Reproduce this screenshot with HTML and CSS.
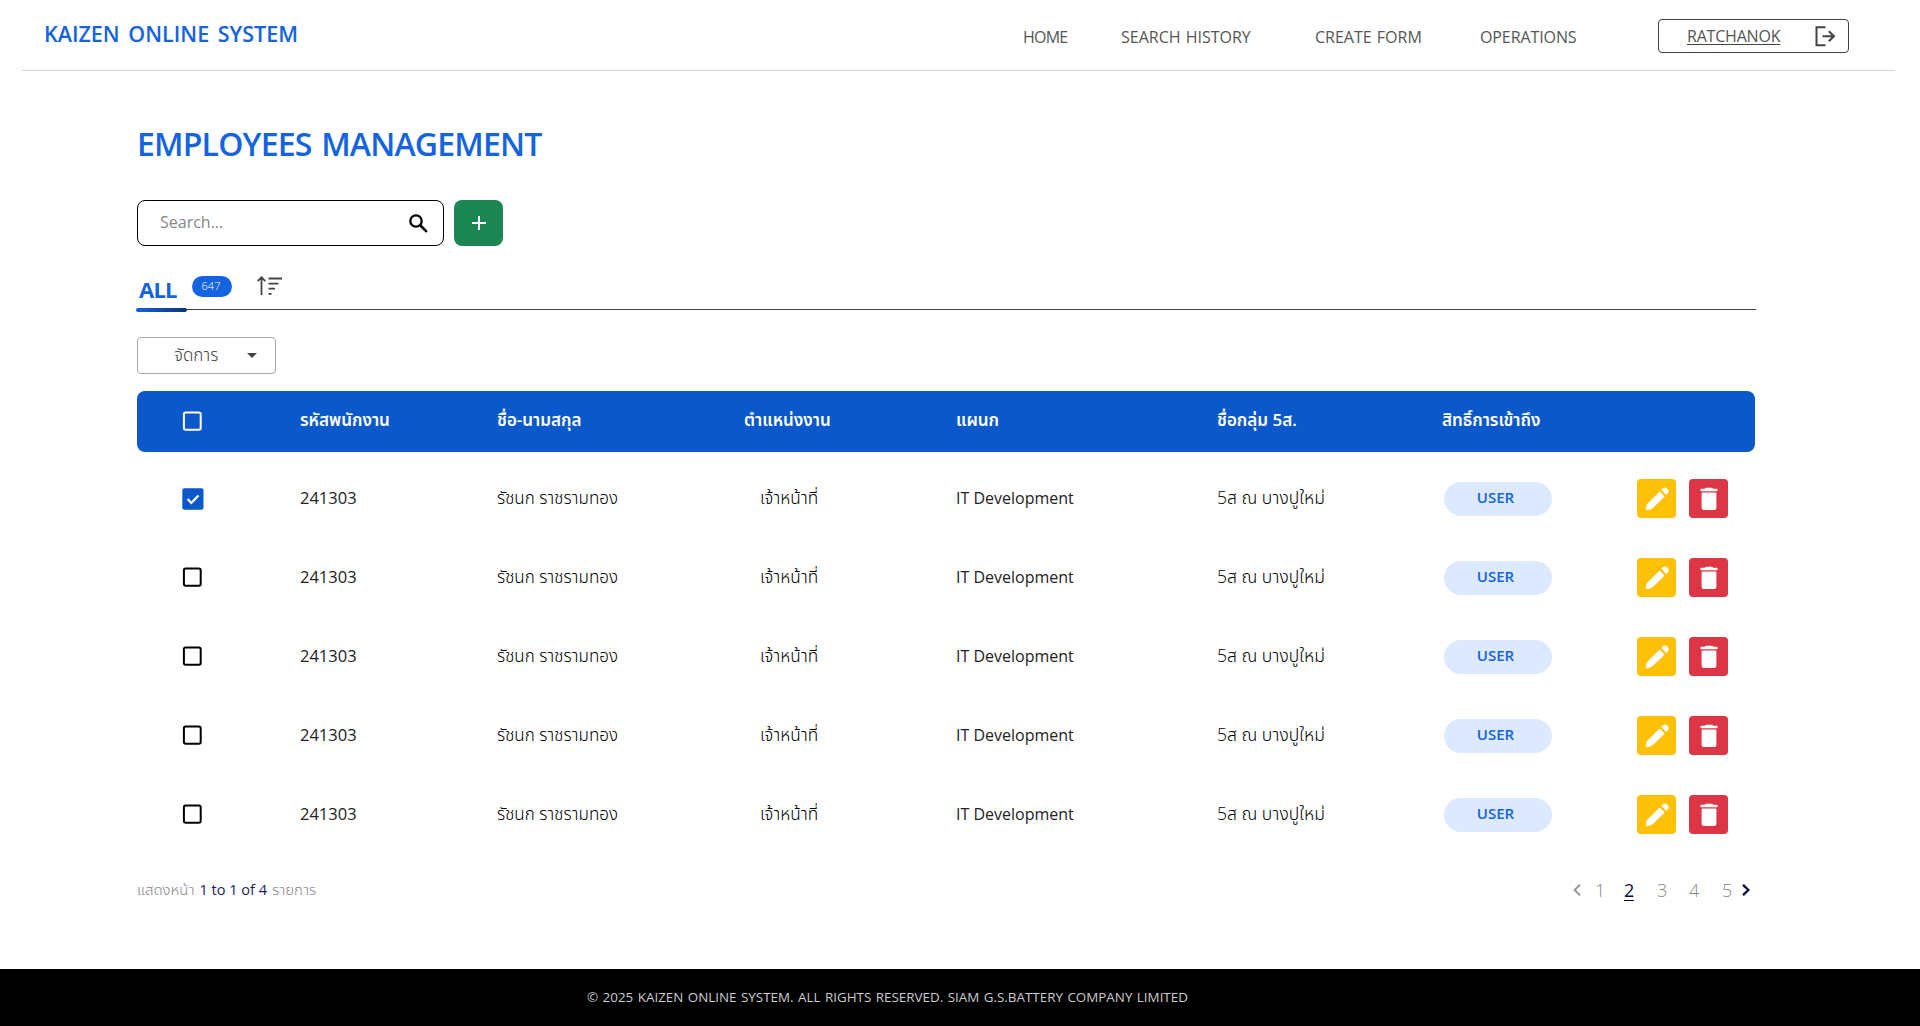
FILE: index.html
```
<!DOCTYPE html>
<html lang="th">
<head>
<meta charset="utf-8">
<title>Kaizen Online System</title>
<link rel="stylesheet" href="styles.css">
</head>
<body>
<svg class="sprite" aria-hidden="true">
  <symbol id="box" viewBox="0 0 20 20"><rect x="1.9" y="1.4" width="16.8" height="17.4" rx="1.8" fill="none" stroke="currentColor" stroke-width="2"/></symbol>
  <symbol id="box-checked" viewBox="0 0 22 22"><rect x="0.3" y="0.3" width="21.2" height="21.4" rx="2" fill="#0b58ca"/><path d="M5.6 11 9.3 14.9 16.5 7.5" fill="none" stroke="#fff" stroke-width="2.2"/></symbol>
  <symbol id="pencil" viewBox="0 0 24 24"><path d="M14.6 4.4 19.7 9.4 8.9 20.1Q6 23.3 .8 23.2 .8 17.4 3.5 15.6Z M16.2 2.8 17.9 1.3Q20.2-.4 22.7 1.9 24.7 4.6 22.8 6.2L21.3 7.9Z" fill="#fff"/></symbol>
  <symbol id="trash" viewBox="0 0 18 24"><path d="M1 1.8H4.8Q5.2.7 6.4.7H11.6Q12.8.7 13.2 1.8H17Q17.6 1.8 17.6 3T17 4.2H1Q.4 4.2.4 3T1 1.8Z M1.6 6.4Q1.6 5.6 2.6 5.6H15.4Q16.4 5.6 16.4 6.4V20.8Q16.4 23 14.2 23H3.8Q1.6 23 1.6 20.8Z" fill="#fff"/></symbol>
</svg>

<header class="topbar">
  <div class="brand">KAIZEN ONLINE SYSTEM</div>
  <nav class="nav">
    <a class="nav-home">HOME</a>
    <a class="nav-history">SEARCH HISTORY</a>
    <a class="nav-create">CREATE FORM</a>
    <a class="nav-ops">OPERATIONS</a>
  </nav>
  <button class="user">
    <span>RATCHANOK</span>
    <svg width="21" height="21" viewBox="0 0 21 21" fill="none" stroke="#444" stroke-width="2"><path d="M10.5 1.3H1.5V19.2H10.5M7.5 10.2H19M13.8 5.2 19 10.2 13.8 15.2"/></svg>
  </button>
</header>

<main class="page">
  <h1 class="title">EMPLOYEES MANAGEMENT</h1>

  <div class="tools">
    <div class="search">
      <span>Search...</span>
      <svg width="19" height="19" viewBox="0 0 19 19" fill="none" stroke="#000"><circle cx="7" cy="7" r="5.7" stroke-width="2.3"/><path d="M11 11 17.8 17.8" stroke-width="2.6"/></svg>
    </div>
    <button class="add"><svg width="14" height="14" viewBox="0 0 14 14" stroke="#fff" stroke-width="2"><path d="M0 7H14M7 0V14"/></svg></button>
  </div>

  <div class="tabs">
    <div class="tab">ALL</div>
    <span class="count">647</span>
    <svg class="sort" width="26" height="20" viewBox="0 0 26 20" fill="none" stroke="#444" stroke-width="1.8"><path d="M4.5 19V1.5M.7 5.2 4.5 1.3 8.3 5.2"/><path d="M11.5 2.5H25M11.5 7.6H21.5M11.5 12.7H18M11.5 17.8H14.5"/></svg>
  </div>

  <button class="manage"><span>จัดการ</span><i class="caret"></i></button>

  <section class="table">
    <div class="row head">
      <svg class="check" width="20" height="20"><use href="#box"/></svg>
      <span>รหัสพนักงาน</span><span>ชื่อ-นามสกุล</span><span>ตำแหน่งงาน</span><span>แผนก</span><span>ชื่อกลุ่ม 5ส.</span><span>สิทธิ์การเข้าถึง</span><span></span>
    </div>
    <div class="row">
      <svg class="checked" width="22" height="22"><use href="#box-checked"/></svg>
      <span class="code">241303</span><span class="name">รัชนก ราชรามทอง</span><span class="job">เจ้าหน้าที่</span><span class="dept">IT Development</span><span class="group">5ส ณ บางปูใหม่</span><span class="role">USER</span>
      <div class="actions"><button class="edit"><svg width="24" height="24"><use href="#pencil"/></svg></button><button class="del"><svg width="18" height="24"><use href="#trash"/></svg></button></div>
    </div>
    <div class="row">
      <svg class="check" width="20" height="20"><use href="#box"/></svg>
      <span class="code">241303</span><span class="name">รัชนก ราชรามทอง</span><span class="job">เจ้าหน้าที่</span><span class="dept">IT Development</span><span class="group">5ส ณ บางปูใหม่</span><span class="role">USER</span>
      <div class="actions"><button class="edit"><svg width="24" height="24"><use href="#pencil"/></svg></button><button class="del"><svg width="18" height="24"><use href="#trash"/></svg></button></div>
    </div>
    <div class="row">
      <svg class="check" width="20" height="20"><use href="#box"/></svg>
      <span class="code">241303</span><span class="name">รัชนก ราชรามทอง</span><span class="job">เจ้าหน้าที่</span><span class="dept">IT Development</span><span class="group">5ส ณ บางปูใหม่</span><span class="role">USER</span>
      <div class="actions"><button class="edit"><svg width="24" height="24"><use href="#pencil"/></svg></button><button class="del"><svg width="18" height="24"><use href="#trash"/></svg></button></div>
    </div>
    <div class="row">
      <svg class="check" width="20" height="20"><use href="#box"/></svg>
      <span class="code">241303</span><span class="name">รัชนก ราชรามทอง</span><span class="job">เจ้าหน้าที่</span><span class="dept">IT Development</span><span class="group">5ส ณ บางปูใหม่</span><span class="role">USER</span>
      <div class="actions"><button class="edit"><svg width="24" height="24"><use href="#pencil"/></svg></button><button class="del"><svg width="18" height="24"><use href="#trash"/></svg></button></div>
    </div>
    <div class="row">
      <svg class="check" width="20" height="20"><use href="#box"/></svg>
      <span class="code">241303</span><span class="name">รัชนก ราชรามทอง</span><span class="job">เจ้าหน้าที่</span><span class="dept">IT Development</span><span class="group">5ส ณ บางปูใหม่</span><span class="role">USER</span>
      <div class="actions"><button class="edit"><svg width="24" height="24"><use href="#pencil"/></svg></button><button class="del"><svg width="18" height="24"><use href="#trash"/></svg></button></div>
    </div>
  </section>

  <div class="bottom">
    <div class="summary"><span>แสดงหน้า</span><b>1 to 1 of 4</b><span>รายการ</span></div>
    <div class="pager">
      <svg width="8" height="12" viewBox="0 0 8 12" fill="none" stroke="#999" stroke-width="2"><path d="M7 .8 1.6 6 7 11.2"/></svg>
      <span>1</span><span class="current">2</span><span>3</span><span>4</span><span>5</span>
      <svg width="8" height="12" viewBox="0 0 8 12" fill="none" stroke="#0a0a3c" stroke-width="2.3"><path d="M1 .8 6.4 6 1 11.2"/></svg>
    </div>
  </div>
</main>

<footer class="footer">© 2025 KAIZEN ONLINE SYSTEM. ALL RIGHTS RESERVED. SIAM G.S.BATTERY COMPANY LIMITED</footer>
</body>
</html>
```
FILE: styles.css
```
* { box-sizing: border-box; }
body {
  margin: 0;
  height: 1026px;
  display: flex;
  flex-direction: column;
  background: #fff;
  font-family: "Open Sans", "Noto Sans Thai", "Noto Sans", sans-serif;
  white-space: nowrap;
}
button { font: inherit; padding: 0; border: 0; background: none; display: flex; align-items: center; }
svg { display: block; flex: none; }
.sprite { position: absolute; width: 0; height: 0; }

.topbar {
  height: 71px;
  margin: 0 25px 0 22px;
  padding-left: 22px;
  border-bottom: 1px solid #d4d4d4;
  display: flex;
  align-items: flex-start;
  flex: none;
}
.brand { width: 979px; padding-top: 19px; font-size: 21.5px; line-height: 29px; font-weight: 600; word-spacing: 3px; color: #1463e0; }
.nav { width: 635px; padding-top: 25px; display: grid; grid-template-columns: 98px 194px 165px 1fr; font-size: 16px; line-height: 24px; font-weight: 400; color: #555; word-spacing: 1px; }
.nav-home { letter-spacing: -.8px; }
.nav-ops { letter-spacing: -.1px; }
.user { width: 191px; height: 34px; margin-top: 19px; padding: 0 12px 0 28px; border: 1px solid #444; border-radius: 4px; justify-content: space-between; font-size: 16px; font-weight: 400; color: #555; letter-spacing: -.2px; }
.user span { border-bottom: 1px solid #444; line-height: 16px; height: 17px; }

.page { padding: 0 164px 0 137px; flex: 1; }
.title { margin: 51px 0 0; font-size: 32px; line-height: 44px; font-weight: 600; letter-spacing: -.8px; word-spacing: 2px; color: #1463e0; }
.tools { display: flex; gap: 10px; margin-top: 34px; }
.search { width: 307px; height: 46px; padding: 0 15px 0 22px; border: 1px solid #000; border-radius: 8px; display: flex; align-items: center; justify-content: space-between; font-size: 16px; font-weight: 400; color: #888; }
.search span { padding-bottom: 2px; }
.add { width: 49px; height: 46px; border-radius: 8px; background: #1b8653; justify-content: center; }

.tabs { height: 64px; border-bottom: 1px solid #444; display: flex; align-items: flex-start; }
.tab { position: relative; width: 55px; height: 64px; padding: 28px 0 0 2px; font-size: 22px; line-height: 31px; font-weight: 700; letter-spacing: -.8px; color: #1463e0; }
.tab::after { content: ""; position: absolute; left: -1px; bottom: -2px; width: 51px; height: 4px; border-radius: 2px; background: linear-gradient(90deg, #1463e0, #0a3475); }
.count { width: 40px; height: 21px; margin: 30px 25px 0 0; padding-right: 2px; border-radius: 11px; background: #1463e0; color: #fff; font-size: 11px; line-height: 20px; font-weight: 300; text-align: center; }
.sort { margin-top: 30px; }

.manage { width: 139px; height: 37px; margin-top: 27px; padding-left: 36px; border: 1px solid #aaa; border-radius: 4px; gap: 29px; font-size: 17px; font-weight: 300; color: #444; }
.manage span { padding-top: 1px; }
.caret { border: 5px solid transparent; border-top-color: #444; border-bottom: 0; }

.table { margin-top: 17px; width: 1618px; }
.row { height: 79px; display: grid; grid-template-columns: 163px 197px 247px 212px 261px 225px 195px 1fr; align-items: center; font-size: 17px; font-weight: 350; color: #000; }
.row > span:not(.role) { padding-bottom: 2px; }
.row > .name, .row > .job, .row > .group { padding-bottom: 0 !important; }
.head { height: 61px; margin-bottom: 7px; border-radius: 8px; background: #0b58ca; color: #fff; font-weight: 600; }
.check { margin-left: 45px; margin-bottom: 1px; }
.checked { margin-left: 45px; margin-top: 1px; }
.code { font-size: 16.5px; font-weight: 400; color: #222; }
.name { font-size: 17px; }
.job { padding-left: 16px; font-size: 17.2px; }
.dept { font-size: 16px; font-weight: 400; color: #222; }
.group { font-size: 17.5px; }
.role { width: 108px; height: 34px; margin-left: 2px; padding-right: 5px; border-radius: 17px; background: #dce9ff; color: #1463e0; text-align: center; font-size: 15px; line-height: 31px; font-weight: 600; }
.actions { display: flex; gap: 13px; }
.edit, .del { width: 39px; height: 39px; border-radius: 4px; justify-content: center; }
.edit { background: #ffc107; }
.del { background: #dc3545; }

.bottom { display: flex; justify-content: space-between; margin: 23px 6px 0 0; height: 26px; align-items: center; }
.summary { display: flex; gap: 5px; align-items: baseline; padding-top: 1px; font-size: 15px; font-weight: 300; color: #888; }
.summary b { font-size: 14.5px; font-weight: 400; color: #1c1c5c; }
.pager { display: grid; grid-template-columns: 22px 29px 33px 32px 33px 20px 8px; align-items: center; font-size: 18px; font-weight: 300; line-height: 24px; color: #888; }
.pager .current { justify-self: start; line-height: 19px; margin-top: 2px; color: #0a0a3c; font-weight: 400; border-bottom: 1px solid #0a0a3c; }

.footer { height: 57px; flex: none; padding-left: 587px; background: #000; color: #ccc; font-size: 13.4px; font-weight: 400; line-height: 56px; word-spacing: 1px; }
```
